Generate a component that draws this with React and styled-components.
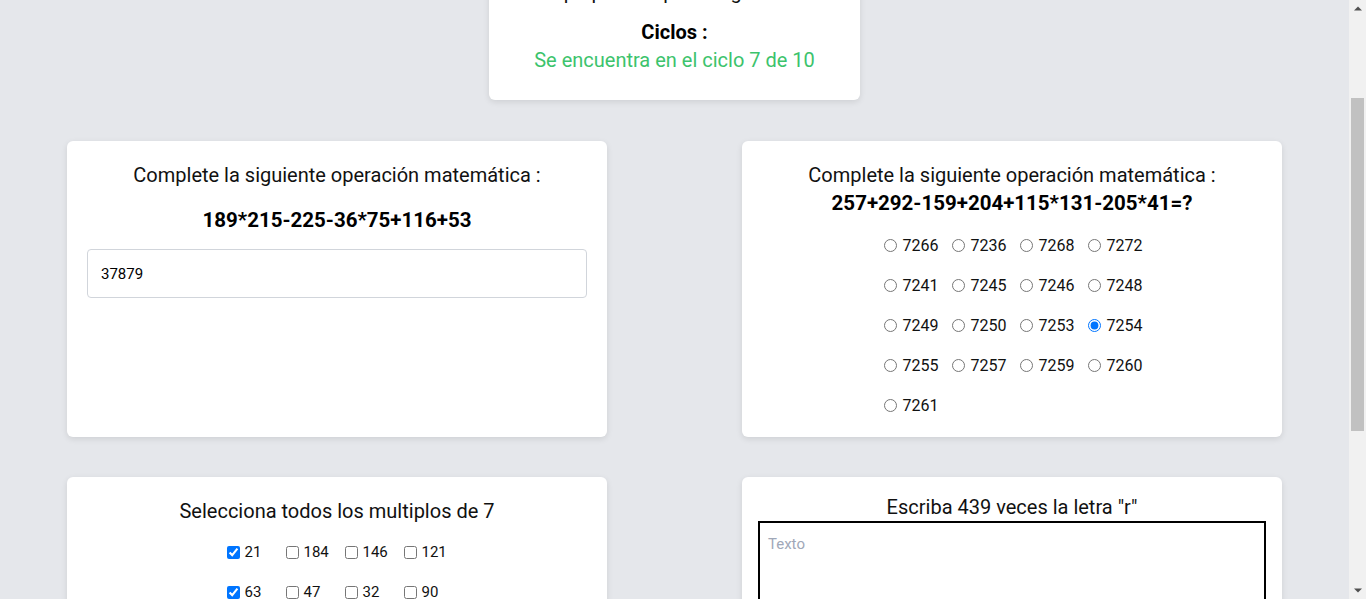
import React, { useLayoutEffect, useRef, useState } from 'react';
import styled, { createGlobalStyle } from 'styled-components';

const FONT = `Roboto, "Noto Sans", sans-serif`;

const Global = createGlobalStyle`
  html, body { margin: 0; padding: 0; height: 100%; overflow: hidden; }
  body {
    background: #e5e7eb;
    font-family: ${FONT};
    color: #111827;
  }
  #root { height: 100%; }
  * { box-sizing: border-box; }
`;

const Shell = styled.div`
  display: flex;
  height: 100vh;
`;

const Viewport = styled.div`
  flex: 1;
  min-width: 0;
  overflow-y: auto;
  scrollbar-width: none;
  &::-webkit-scrollbar { display: none; }
`;

const ScrollBar = styled.div`
  width: 17px;
  flex: none;
  background: #f1f1f1;
  display: flex;
  flex-direction: column;
`;

const ArrowBtn = styled.div`
  height: 17px;
  flex: none;
  display: flex;
  align-items: center;
  justify-content: center;
`;

const Track = styled.div`
  flex: 1;
  position: relative;
`;

const Thumb = styled.div`
  position: absolute;
  left: 2px;
  right: 2px;
  background: #c1c1c1;
`;

const Page = styled.main`
  padding: 12px 0 33px;
  display: flex;
  flex-direction: column;
  align-items: center;
`;

const StatusCard = styled.section`
  width: 371px;
  background: #fff;
  border-radius: 6px;
  box-shadow: 0 2px 6px rgba(0, 0, 0, 0.1);
  padding: 16px 24px 26px;
  display: flex;
  flex-direction: column;
  gap: 12px;
  text-align: center;
`;

const StatBlock = styled.div`
  display: flex;
  flex-direction: column;
`;

const StatLabel = styled.div`
  font-size: 20px;
  line-height: 28px;
  font-weight: 700;
  color: #000;
`;

const StatValue = styled.div`
  font-size: 20px;
  line-height: 28px;
  color: ${(p) => (p.$green ? '#3cc36c' : '#111')};
`;

const Grid = styled.div`
  width: 1215px;
  margin-top: 41px;
  display: grid;
  grid-template-columns: 1fr 1fr;
  column-gap: 135px;
  row-gap: 40px;
`;

const Card = styled.section`
  background: #fff;
  border-radius: 6px;
  box-shadow: 0 2px 6px rgba(0, 0, 0, 0.1);
  padding: ${(p) => (p.$tight ? '16px' : '20px')};
  display: flex;
  flex-direction: column;
  align-items: center;
`;

const Title = styled.h2`
  margin: 0;
  font-size: 20px;
  line-height: 28px;
  font-weight: 400;
  color: #111;
  text-align: center;
`;

const Equation = styled.div`
  margin-top: ${(p) => p.$mt || 0}px;
  font-size: 20.5px;
  line-height: 28px;
  font-weight: 700;
  color: #000;
`;

const AnswerInput = styled.input`
  margin-top: 15px;
  width: 100%;
  height: 49px;
  border: 1px solid #d1d5db;
  border-radius: 4px;
  padding: 0 13px;
  font-family: ${FONT};
  font-size: 15px;
  color: #000;
  outline: none;
`;

const OptionGrid = styled.div`
  margin-top: ${(p) => p.$mt}px;
  margin-left: ${(p) => p.$shift || 0}px;
  display: grid;
  grid-template-columns: repeat(4, ${(p) => p.$col}px);
  column-gap: 12px;
  row-gap: 16px;
  justify-content: center;
`;

const Option = styled.label`
  display: flex;
  align-items: center;
  height: 24px;
  font-size: ${(p) => p.$size}px;
  color: #111;
  white-space: nowrap;
`;

const Mark = styled.input`
  width: 13px;
  height: 13px;
  margin: 0 ${(p) => p.$gap}px 0 0;
  flex: none;
`;

const TextBox = styled.textarea`
  width: 100%;
  height: 220px;
  border: 2px solid #000;
  border-radius: 0;
  padding: 12px 8px;
  font-family: ${FONT};
  font-size: 15px;
  resize: none;
  outline: none;
  &::placeholder { color: #a0a8b8; }
`;

const Footer = styled.div`
  margin-top: 40px;
  display: flex;
  justify-content: center;
`;

const Submit = styled.button`
  height: 40px;
  padding: 0 28px;
  border: none;
  border-radius: 6px;
  background: #3cc36c;
  color: #fff;
  font-family: ${FONT};
  font-size: 16px;
  font-weight: 600;
`;

const radios = [
  7266, 7236, 7268, 7272,
  7241, 7245, 7246, 7248,
  7249, 7250, 7253, 7254,
  7255, 7257, 7259, 7260,
  7261,
];

const checks = [
  [21, true], [184], [146], [121],
  [63, true], [47], [32], [90],
  [98], [15], [77, true], [200],
  [134], [56], [88], [140, true],
];

const Arrow = ({ up }) => (
  <svg width="8" height="5" viewBox="0 0 8 5">
    <path d={up ? 'M0 4.5L4 0.5L8 4.5z' : 'M0 0.5L4 4.5L8 0.5z'} fill="#505050" />
  </svg>
);

export default function App() {
  const viewRef = useRef(null);
  const trackRef = useRef(null);
  const [thumb, setThumb] = useState({ top: 81, height: 333 });

  useLayoutEffect(() => {
    const v = viewRef.current;
    v.scrollTop = 146;
    const trackH = trackRef.current.clientHeight;
    setThumb({
      top: (v.scrollTop / v.scrollHeight) * trackH,
      height: (v.clientHeight / v.scrollHeight) * trackH,
    });
  }, []);

  return (
    <>
      <Global />
      <Shell>
        <Viewport ref={viewRef}>
          <Page>
            <StatusCard>
              <StatBlock>
                <StatLabel>Jugador :</StatLabel>
                <StatValue>Usuario de prueba</StatValue>
              </StatBlock>
              <StatBlock>
                <StatLabel>Tiempo :</StatLabel>
                <StatValue>Tiempo para responder gestionado</StatValue>
              </StatBlock>
              <StatBlock>
                <StatLabel>Ciclos :</StatLabel>
                <StatValue $green>Se encuentra en el ciclo 7 de 10</StatValue>
              </StatBlock>
            </StatusCard>

            <Grid>
              <Card>
                <Title>Complete la siguiente operación matemática :</Title>
                <Equation $mt={17}>189*215-225-36*75+116+53</Equation>
                <AnswerInput defaultValue="37879" />
              </Card>

              <Card>
                <Title>Complete la siguiente operación matemática :</Title>
                <Equation>257+292-159+204+115*131-205*41=?</Equation>
                <OptionGrid $mt={16} $col={56} $shift={3}>
                  {radios.map((v) => (
                    <Option key={v} $size={16}>
                      <Mark type="radio" name="op" $gap={6} defaultChecked={v === 7254} />
                      {v}
                    </Option>
                  ))}
                </OptionGrid>
              </Card>

              <Card>
                <Title>Selecciona todos los multiplos de 7</Title>
                <OptionGrid $mt={15} $col={47} $shift={3}>
                  {checks.map(([v, on]) => (
                    <Option key={v} $size={15}>
                      <Mark type="checkbox" $gap={5} defaultChecked={!!on} />
                      {v}
                    </Option>
                  ))}
                </OptionGrid>
              </Card>

              <Card $tight>
                <Title>Escriba 439 veces la letra "r"</Title>
                <TextBox placeholder="Texto" />
              </Card>
            </Grid>

            <Footer>
              <Submit>Enviar respuestas</Submit>
            </Footer>
          </Page>
        </Viewport>
        <ScrollBar>
          <ArrowBtn><Arrow up /></ArrowBtn>
          <Track ref={trackRef}>
            <Thumb style={{ top: thumb.top, height: thumb.height }} />
          </Track>
          <ArrowBtn><Arrow /></ArrowBtn>
        </ScrollBar>
      </Shell>
    </>
  );
}
